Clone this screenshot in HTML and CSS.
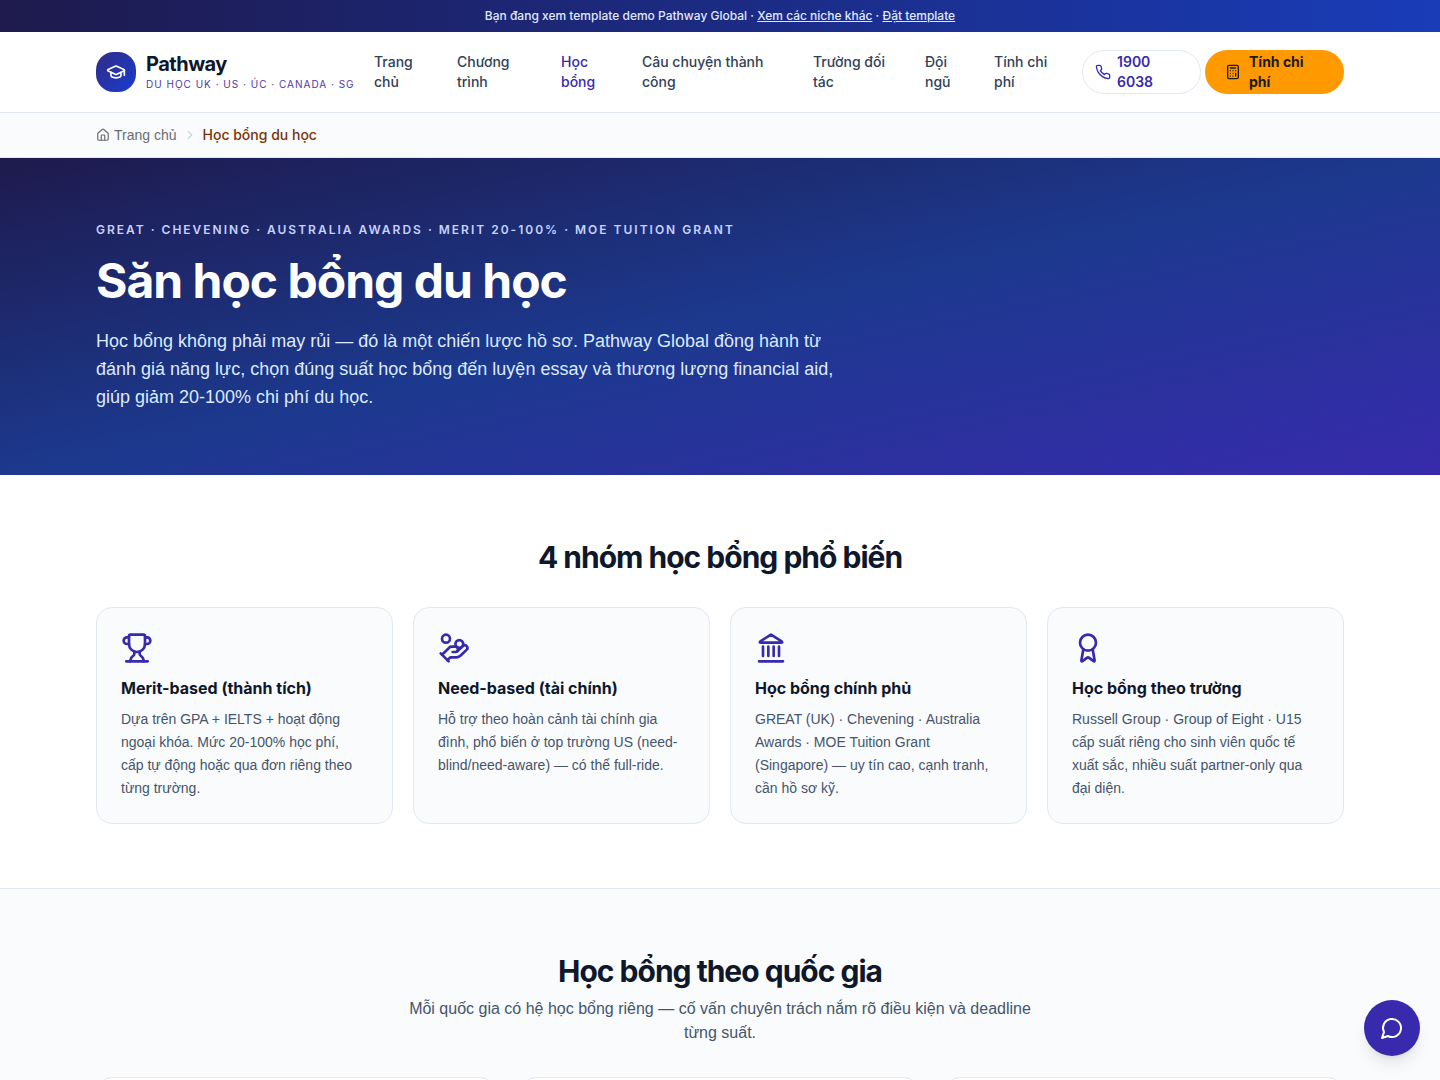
FILE: index.html
```html
<!DOCTYPE html>
<html lang="vi">
<head>
<meta charset="UTF-8">
<meta name="viewport" content="width=device-width, initial-scale=1">
<title>Học bổng du học - Pathway</title>
<link rel="stylesheet" href="styles.css">
</head>
<body>

<div class="topbar">
	Bạn đang xem template demo Pathway Global · <a href="#">Xem các niche khác</a> · <a href="#">Đặt template</a>
</div>

<header class="header">
	<div class="container header-row">
		<a class="logo" href="#">
			<span class="logo-mark">
				<svg class="icon" width="20" height="20" viewBox="0 0 24 24"><path d="M21.42 10.922a1 1 0 0 0-.019-1.838L12.83 5.18a2 2 0 0 0-1.66 0L2.6 9.08a1 1 0 0 0 0 1.832l8.57 3.908a2 2 0 0 0 1.66 0z"/><path d="M22 10v6"/><path d="M6 12.5V16a6 3 0 0 0 12 0v-3.5"/></svg>
			</span>
			<span class="logo-text">
				<span class="logo-name">Pathway</span>
				<span class="logo-sub">Du học UK · US · Úc · Canada · SG</span>
			</span>
		</a>
		<nav class="nav">
			<a href="#">Trang chủ</a>
			<a href="#">Chương trình</a>
			<a href="#" class="active">Học bổng</a>
			<a href="#">Câu chuyện thành công</a>
			<a href="#">Trường đối tác</a>
			<a href="#">Đội ngũ</a>
			<a href="#">Tính chi phí</a>
		</nav>
		<a class="phone" href="tel:19006038">
			<svg class="icon" width="16" height="16" viewBox="0 0 24 24"><path d="M22 16.92v3a2 2 0 0 1-2.18 2 19.79 19.79 0 0 1-8.63-3.07 19.5 19.5 0 0 1-6-6 19.79 19.79 0 0 1-3.07-8.67A2 2 0 0 1 4.11 2h3a2 2 0 0 1 2 1.72 12.84 12.84 0 0 0 .7 2.81 2 2 0 0 1-.45 2.11L8.09 9.91a16 16 0 0 0 6 6l1.27-1.27a2 2 0 0 1 2.11-.45 12.84 12.84 0 0 0 2.81.7A2 2 0 0 1 22 16.92z"/></svg>
			<span>1900 6038</span>
		</a>
		<a class="cta" href="#">
			<svg class="icon" width="16" height="16" viewBox="0 0 24 24"><rect width="16" height="20" x="4" y="2" rx="2"/><path d="M8 6h8M16 14v4M16 10h.01M12 10h.01M8 10h.01M12 14h.01M8 14h.01M12 18h.01M8 18h.01"/></svg>
			<span>Tính chi phí</span>
		</a>
	</div>
</header>

<nav class="breadcrumb">
	<div class="container breadcrumb-row">
		<a href="#">
			<svg class="icon" width="14" height="14" viewBox="0 0 24 24"><path d="M15 21v-8a1 1 0 0 0-1-1h-4a1 1 0 0 0-1 1v8"/><path d="M3 10a2 2 0 0 1 .709-1.528l7-5.999a2 2 0 0 1 2.582 0l7 5.999A2 2 0 0 1 21 10v9a2 2 0 0 1-2 2H5a2 2 0 0 1-2-2z"/></svg>
			Trang chủ
		</a>
		<svg class="icon sep" width="14" height="14" viewBox="0 0 24 24"><path d="m9 18 6-6-6-6"/></svg>
		<span class="current">Học bổng du học</span>
	</div>
</nav>

<main>
	<section class="hero">
		<div class="container">
			<p class="eyebrow">GREAT · Chevening · Australia Awards · Merit 20-100% · MOE Tuition Grant</p>
			<h1>Săn học bổng du học</h1>
			<p class="lead">Học bổng không phải may rủi — đó là một chiến lược hồ sơ. Pathway Global đồng hành từ đánh giá năng lực, chọn đúng suất học bổng đến luyện essay và thương lượng financial aid, giúp giảm 20-100% chi phí du học.</p>
		</div>
	</section>

	<section class="section">
		<div class="container">
			<h2>4 nhóm học bổng phổ biến</h2>
			<div class="types">
				<article class="card">
					<svg class="icon" width="32" height="32" viewBox="0 0 24 24"><path d="M10 14.66v1.626a2 2 0 0 1-.976 1.696A5 5 0 0 0 7 21.978"/><path d="M14 14.66v1.626a2 2 0 0 0 .976 1.696A5 5 0 0 1 17 21.978"/><path d="M18 9h1.5a2.5 2.5 0 0 0 0-5H18"/><path d="M4 22h16"/><path d="M6 9a6 6 0 0 0 12 0V3a1 1 0 0 0-1-1H7a1 1 0 0 0-1 1z"/><path d="M6 9H4.5a2.5 2.5 0 0 1 0-5H6"/></svg>
					<h3>Merit-based (thành tích)</h3>
					<p>Dựa trên GPA + IELTS + hoạt động ngoại khóa. Mức 20-100% học phí, cấp&nbsp;tự động hoặc qua đơn riêng theo từng trường.</p>
				</article>
				<article class="card">
					<svg class="icon" width="32" height="32" viewBox="0 0 24 24"><path d="M11 15h2a2 2 0 1 0 0-4h-3c-.6 0-1.1.2-1.4.6L3 17"/><path d="m7 21 1.6-1.4c.3-.4.8-.6 1.4-.6h4c1.1 0 2.1-.4 2.8-1.2l4.6-4.4a2 2 0 0 0-2.75-2.91l-4.2 3.9"/><path d="m2 16 6 6"/><circle cx="16" cy="9" r="2.9"/><circle cx="6" cy="5" r="3"/></svg>
					<h3>Need-based (tài chính)</h3>
					<p>Hỗ trợ theo hoàn cảnh tài chính gia đình, phổ biến ở top trường US (need-blind/need-aware) — có thể full-ride.</p>
				</article>
				<article class="card">
					<svg class="icon" width="32" height="32" viewBox="0 0 24 24"><path d="M3 22h18M6 18v-7M10 18v-7M14 18v-7M18 18v-7"/><path d="m12 2 8 5q1 1-.5 1h-15Q3 8 4 7z"/></svg>
					<h3>Học bổng chính phủ</h3>
					<p>GREAT (UK) · Chevening · Australia Awards · MOE Tuition Grant (Singapore) — uy tín cao, cạnh tranh, cần hồ sơ kỹ.</p>
				</article>
				<article class="card">
					<svg class="icon" width="32" height="32" viewBox="0 0 24 24"><path d="m15.477 12.89 1.515 8.526a.5.5 0 0 1-.81.47l-3.58-2.687a1 1 0 0 0-1.197 0l-3.586 2.686a.5.5 0 0 1-.81-.469l1.514-8.526"/><circle cx="12" cy="8" r="6"/></svg>
					<h3>Học bổng theo trường</h3>
					<p>Russell Group · Group of Eight · U15 cấp suất riêng cho sinh viên quốc tế xuất sắc, nhiều suất partner-only qua đại diện.</p>
				</article>
			</div>
		</div>
	</section>

	<section class="section section-alt">
		<div class="container">
			<h2>Học bổng theo quốc gia</h2>
			<p class="section-sub">Mỗi quốc gia có hệ học bổng riêng — cố vấn chuyên trách nắm rõ điều kiện và deadline từng suất.</p>
			<div class="countries">
				<article class="country"></article>
				<article class="country"></article>
				<article class="country"></article>
			</div>
		</div>
	</section>
</main>

<button class="chat" type="button" aria-label="Chat">
	<svg class="icon" width="24" height="24" viewBox="0 0 24 24"><path d="M7.9 20A9 9 0 1 0 4 16.1L2 22Z"/></svg>
</button>

</body>
</html>
```

FILE: styles.css
```css
* {
	box-sizing: border-box;
	margin: 0;
	padding: 0;
}
body {
	font-family: Inter, "Liberation Sans", sans-serif;
	font-size: 16px;
	line-height: 24px;
	color: #0f172b;
	background: #fff;
}
a {
	color: inherit;
	text-decoration: none;
}
.icon {
	display: block;
	flex-shrink: 0;
	fill: none;
	stroke: currentColor;
	stroke-width: 2;
	stroke-linecap: round;
	stroke-linejoin: round;
}
.container {
	max-width: 1280px;
	margin: 0 auto;
	padding: 0 16px;
}

.topbar {
	padding: 8px 16px;
	font-size: 12px;
	line-height: 16px;
	font-weight: 500;
	text-align: center;
	color: #e0e7ff;
	background: linear-gradient(90deg, #1e1a4d, #193cb8);
}
.topbar a {
	text-decoration: underline;
}

.header {
	background: #fff;
	border-bottom: 1px solid #e2e8f0;
}
.header-row {
	display: flex;
	align-items: center;
	gap: 4px;
	min-height: 80px;
	font-size: 14px;
	line-height: 20px;
}
.logo {
	display: flex;
	align-items: center;
	flex: 0 0 262px;
	gap: 10px;
}
.logo-mark {
	display: flex;
	align-items: center;
	justify-content: center;
	width: 40px;
	height: 40px;
	border-radius: 18px;
	color: #fff;
	background: linear-gradient(135deg, #312c85, #193cd0);
}
.logo-text {
	display: flex;
	flex-direction: column;
	white-space: nowrap;
}
.logo-name {
	font-size: 20px;
	line-height: 24px;
	font-weight: 700;
	letter-spacing: -0.5px;
}
.logo-sub {
	font-size: 10px;
	line-height: 16px;
	letter-spacing: 1px;
	text-transform: uppercase;
	color: #4f39a6;
}
.nav {
	display: grid;
	flex: 1;
	grid-template-columns: 79fr 100fr 77fr 167fr 108fr 65fr 96fr;
	gap: 4px;
	font-weight: 500;
	color: #314158;
}
.nav a {
	padding: 0 12px;
}
.nav .active {
	color: #372aac;
}
.phone,
.cta {
	display: flex;
	align-items: center;
	min-height: 44px;
	border-radius: 22px;
}
.phone {
	flex: 0 0 119px;
	gap: 6px;
	padding: 0 12px;
	border: 1px solid #e2e8f0;
	font-weight: 600;
	color: #372aac;
}
.cta {
	flex: 0 0 139px;
	gap: 8px;
	padding: 0 20px;
	font-weight: 700;
	color: #1c1917;
	background: #ff9900;
}

.breadcrumb {
	background: #f9fbfd;
	border-bottom: 1px solid #e2e8f0;
}
.breadcrumb-row {
	display: flex;
	align-items: center;
	gap: 6px;
	min-height: 44px;
	font-size: 14px;
	line-height: 20px;
}
.breadcrumb a {
	display: flex;
	align-items: center;
	gap: 4px;
	color: #6b6b73;
}
.breadcrumb .sep {
	color: #cad5e2;
}
.breadcrumb .current {
	font-weight: 500;
	color: #7b3306;
}

.hero {
	padding: 64px 0;
	color: #fff;
	background: linear-gradient(to bottom right, #1e1a4d, #1c398e 50%, #372aac);
}
.eyebrow {
	font-size: 12px;
	line-height: 16px;
	font-weight: 600;
	letter-spacing: 2px;
	text-transform: uppercase;
	color: #c6d2ff;
}
h1 {
	margin: 12px 0 16px;
	font-size: 48px;
	line-height: 61px;
	font-weight: 700;
	letter-spacing: -1px;
}
.breadcrumb a,
.lead,
.section-sub,
.card p {
	font-family: "Liberation Sans", Arial, sans-serif;
}
.lead {
	max-width: 768px;
	font-size: 18px;
	line-height: 28px;
	color: #dbeafe;
}

.section {
	padding: 64px 0;
}
.section-alt {
	background: #f9fbfd;
	border-top: 1px solid #e2e8f0;
}
h2 {
	font-size: 30px;
	line-height: 36px;
	font-weight: 700;
	letter-spacing: -1px;
	text-align: center;
}
.section-sub {
	max-width: 640px;
	margin: 8px auto 0;
	text-align: center;
	color: #45556c;
}
.types {
	display: grid;
	grid-template-columns: repeat(4, 1fr);
	gap: 20px;
	margin-top: 32px;
}
.card {
	padding: 24px 24px 23px;
	border: 1px solid #e2e8f0;
	border-radius: 16px;
	background: #f9fbfd;
}
.card .icon {
	color: #372aac;
}
.card h3 {
	margin: 12px 0 8px;
	font-size: 16px;
	line-height: 24px;
	font-weight: 700;
}
.card p {
	font-size: 14px;
	line-height: 23px;
	color: #45556c;
}
.countries {
	display: grid;
	grid-template-columns: repeat(3, 1fr);
	gap: 24px;
	margin-top: 32px;
}
.country {
	min-height: 240px;
	border: 1px solid #e2e8f0;
	border-radius: 16px;
	background: #fff;
}

.chat {
	position: fixed;
	right: 20px;
	bottom: 24px;
	display: flex;
	align-items: center;
	justify-content: center;
	width: 56px;
	height: 56px;
	border: 0;
	border-radius: 50%;
	color: #fff;
	background: #372aac;
	box-shadow: 0 10px 15px -3px rgba(0,0,0,0.1), 0 4px 6px -4px rgba(0,0,0,0.1);
	cursor: pointer;
}
```
